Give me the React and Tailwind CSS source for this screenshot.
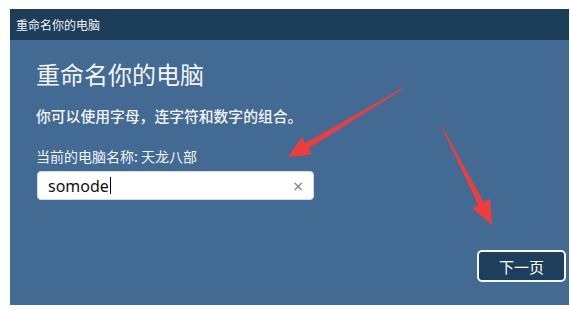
import React from "react";

export default function App() {
  const font = { fontFamily: '"Noto Sans CJK SC", "Noto Sans", sans-serif' };
  return (
    <div className="relative w-[570px] h-[314px] bg-white overflow-hidden" style={font}>
      <div className="ml-[10px] mt-[9px] w-[559px] h-[296px] flex flex-col bg-[#436a93]">
        <div className="h-[31px] bg-[#1d3e58] flex items-center pl-[6px] text-[12px] leading-none text-[#eef2f6]">
          重命名你的电脑
        </div>
        <div className="flex flex-col pl-[26px] pt-[18px]">
          <div className="text-[24px] leading-[32px] text-[#f2f5f8]">重命名你的电脑</div>
          <div className="mt-[16px] text-[14.8px] leading-[20px] text-[#f2f5f8] font-medium">
            你可以使用字母，连字符和数字的组合。
          </div>
          <div className="mt-[20px] text-[14px] leading-[20px] text-[#f2f5f8]">当前的电脑名称: 天龙八部</div>
          <div className="mt-[5px] ml-[1px] w-[277px] h-[29px] bg-white rounded-[4px] border border-[#d6dbe0] flex items-center pl-[10px] pr-[9px]">
            <span className="text-[16px] leading-none text-[#111]" style={{ fontFamily: '"Noto Sans", sans-serif' }}>somode</span>
            <span className="w-[1px] h-[17px] bg-black ml-[1px]" />
            <span className="ml-auto text-[14px] leading-none text-[#777]" style={{ fontFamily: '"DejaVu Sans", sans-serif' }}>×</span>
          </div>
          <div className="mt-[50px] flex justify-end pr-[3px]">
            <div className="w-[89px] h-[32px] rounded-[5px] border-2 border-[#f4f7fa] bg-[#1d3f5c] flex items-center justify-center text-[15px] leading-none text-white">
              下一页
            </div>
          </div>
        </div>
      </div>
      <svg className="absolute left-0 top-0" width="570" height="314" viewBox="0 0 570 314">
        <polygon
          fill="#f03c3c"
          points="401.7,88.6 305.4,143.2 301.8,137.2 288,157 312,154.4 308.4,148.4 402.3,89.4"
        />
        <polygon
          fill="#f03c3c"
          points="441.6,127.2 478.4,205 472.2,208.1 492,225 490,199.1 483.8,202.2 442.4,126.8"
        />
      </svg>
    </div>
  );
}
